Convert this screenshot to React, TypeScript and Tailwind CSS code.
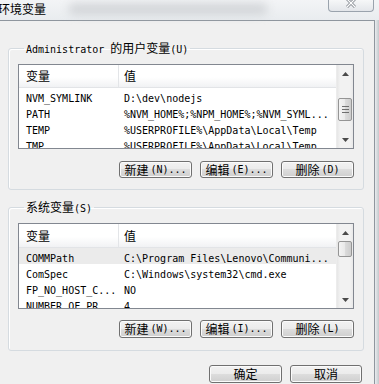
import React from "react";

type Row = [string, string];

const userRows: Row[] = [
  ["NVM_SYMLINK", "D:\\dev\\nodejs"],
  ["PATH", "%NVM_HOME%;%NPM_HOME%;%NVM_SYML..."],
  ["TEMP", "%USERPROFILE%\\AppData\\Local\\Temp"],
  ["TMP", "%USERPROFILE%\\AppData\\Local\\Temp"],
];

const sysRows: Row[] = [
  ["COMMPath", "C:\\Program Files\\Lenovo\\Communi..."],
  ["ComSpec", "C:\\Windows\\system32\\cmd.exe"],
  ["FP_NO_HOST_C...", "NO"],
  ["NUMBER_OF_PR...", "4"],
];

function Zh({ children }: { children: React.ReactNode }) {
  return <span className="font-['Noto_Sans_CJK_SC',sans-serif] text-[12px]">{children}</span>;
}

function Mono({ children, cls = "" }: { children: React.ReactNode; cls?: string }) {
  return <span className={`font-['DejaVu_Sans_Mono',monospace] text-[10px] whitespace-pre ${cls}`}>{children}</span>;
}

function Btn({ zh, key2, w = "w-[73px]", h = "h-[17px]" }: { zh: string; key2?: string; w?: string; h?: string }) {
  return (
    <button
      className={`${w} ${h} flex items-center justify-center rounded-[3px] border border-[#707070] bg-[linear-gradient(#f2f2f2,#ebebeb_50%,#dddddd_50%,#cfcfcf)] shadow-[inset_0_0_0_1px_#fbfbfb] text-black leading-none`}
    >
      <Zh>{zh}</Zh>
      {key2 && <Mono cls="ml-[2px]">{key2}</Mono>}
    </button>
  );
}

function Arrow({ up }: { up?: boolean }) {
  return (
    <svg width="7" height="4" viewBox="0 0 7 4">
      <path d={up ? "M0 4 L3.5 0 L7 4 Z" : "M0 0 L3.5 4 L7 0 Z"} fill="#4a4a4a" />
    </svg>
  );
}

function ScrollBar({ offset, thumbH, grip }: { offset: string; thumbH: string; grip?: boolean }) {
  return (
    <div className="w-[17px] flex flex-col bg-[linear-gradient(to_right,#e6e6e6,#f2f2f2_20%,#f2f2f2_80%,#e9e9e9)] border-l border-[#ececec]">
      <div className="h-[17px] flex items-center justify-center">
        <Arrow up />
      </div>
      <div className={offset} />
      <div
        className={`${thumbH} mx-[1px] rounded-[2px] border border-[#959595] bg-[linear-gradient(to_right,#f4f4f4,#e9e9e9_50%,#dcdcdc_50%,#cdcdcd)] flex flex-col items-center justify-center gap-[2px]`}
      >
        {grip && (
          <>
            <div className="w-[7px] h-[1px] bg-[#6e6e6e]" />
            <div className="w-[7px] h-[1px] bg-[#6e6e6e]" />
            <div className="w-[7px] h-[1px] bg-[#6e6e6e]" />
          </>
        )}
      </div>
      <div className="flex-1" />
      <div className="h-[17px] flex items-center justify-center">
        <Arrow />
      </div>
    </div>
  );
}

function ListView({ rows, h, headH, selected, offset, thumbH, grip }: {
  rows: Row[];
  h: string;
  headH: string;
  selected?: number;
  offset: string;
  thumbH: string;
  grip?: boolean;
}) {
  return (
    <div className={`${h} border border-[#828790] bg-white flex overflow-hidden`}>
      <div className="flex-1 flex flex-col overflow-hidden">
        <div className={`${headH} shrink-0 flex items-center border-b border-[#e2e4e7] bg-[linear-gradient(#ffffff,#ffffff_55%,#f1f2f4)] text-black`}>
          <div className="w-[100px] h-full pl-[7px] flex items-center border-r border-[#e3e5e8]">
            <Zh>变量</Zh>
          </div>
          <div className="pl-[5px] flex items-center">
            <Zh>值</Zh>
          </div>
        </div>
        {rows.map((r, i) => (
          <div
            key={r[0]}
            className={`h-[16px] shrink-0 flex items-center text-black ${i === selected ? "bg-[#ebebeb]" : ""}`}
          >
            <div className="w-[100px] pl-[7px] overflow-hidden">
              <Mono>{r[0]}</Mono>
            </div>
            <div className="pl-[5px] overflow-hidden whitespace-nowrap">
              <Mono>{r[1]}</Mono>
            </div>
          </div>
        ))}
      </div>
      <ScrollBar offset={offset} thumbH={thumbH} grip={grip} />
    </div>
  );
}

export default function App() {
  return (
    <div className="w-[379px] h-[384px] overflow-hidden flex flex-col bg-[#e4e8ec]">
      {/* title bar */}
      <div className="h-[20px] shrink-0 flex items-start bg-[linear-gradient(#f3f4f6,#e9ecef)] relative">
        <div className="-ml-[2px] mt-[1px] text-black leading-[14px]">
          <Zh>环境变量</Zh>
        </div>
        <div className="ml-[22px] mt-[3px] w-[200px] h-[12px] rounded-full bg-[#b9bcc0] opacity-50 blur-[5px]" />
        <div className="ml-auto mr-[5px] w-[46px] h-[12px] rounded-b-[4px] border border-t-0 border-[#9aa3ad] bg-[linear-gradient(#f6f7f8,#e3e6ea)] flex justify-center items-start">
          <svg width="10" height="8" viewBox="0 0 10 8">
            <path d="M1 -1 L9 7 M9 -1 L1 7" stroke="#8a8f96" strokeWidth="3" />
            <path d="M1 -1 L9 7 M9 -1 L1 7" stroke="#ffffff" strokeWidth="1.2" />
          </svg>
        </div>
      </div>

      <div className="flex-1 flex">
        {/* client area */}
        <div className="w-[375px] bg-[#f0f0f0] border-t border-r border-[#8f969e] pl-[8px] flex flex-col">
          <fieldset className="mt-[19px] w-[356px] border border-[#d5dbe0] rounded-[3px] shadow-[inset_1px_1px_0_#ffffff] px-[9px] pb-[11px]">
            <legend className="ml-[6px] px-[2px] leading-[14px] text-black">
              <Mono>Administrator </Mono>
              <Zh>的用户变量</Zh>
              <Mono>(U)</Mono>
            </legend>
            <div className="mt-[7px]">
              <ListView rows={userRows} h="h-[85px]" headH="h-[23px]" offset="h-[16px]" thumbH="h-[23px]" grip />
            </div>
            <div className="mt-[12px] flex justify-end gap-[8px]">
              <Btn zh="新建" key2="(N)..." />
              <Btn zh="编辑" key2="(E)..." />
              <Btn zh="删除" key2="(D)" />
            </div>
          </fieldset>

          <fieldset className="mt-[9px] w-[356px] border border-[#d5dbe0] rounded-[3px] shadow-[inset_1px_1px_0_#ffffff] px-[9px] pb-[12px]">
            <legend className="ml-[6px] px-[2px] leading-[14px] text-black">
              <Zh>系统变量</Zh>
              <Mono>(S)</Mono>
            </legend>
            <div className="mt-[7px]">
              <ListView rows={sysRows} h="h-[86px]" headH="h-[24px]" selected={0} offset="h-0" thumbH="h-[16px]" />
            </div>
            <div className="mt-[11px] flex justify-end gap-[8px]">
              <Btn zh="新建" key2="(W)..." h="h-[18px]" />
              <Btn zh="编辑" key2="(I)..." h="h-[18px]" />
              <Btn zh="删除" key2="(L)" h="h-[18px]" />
            </div>
          </fieldset>

          <div className="mt-[14px] pr-[2px] flex justify-end gap-[8px] w-[356px]">
            <Btn zh="确定" w="w-[73px]" h="h-[18px]" />
            <Btn zh="取消" w="w-[72px]" h="h-[18px]" />
          </div>
        </div>
        {/* window frame strip */}
        <div className="flex-1 bg-[linear-gradient(to_right,#e9ecef,#c4c8cc)]" />
      </div>
    </div>
  );
}
